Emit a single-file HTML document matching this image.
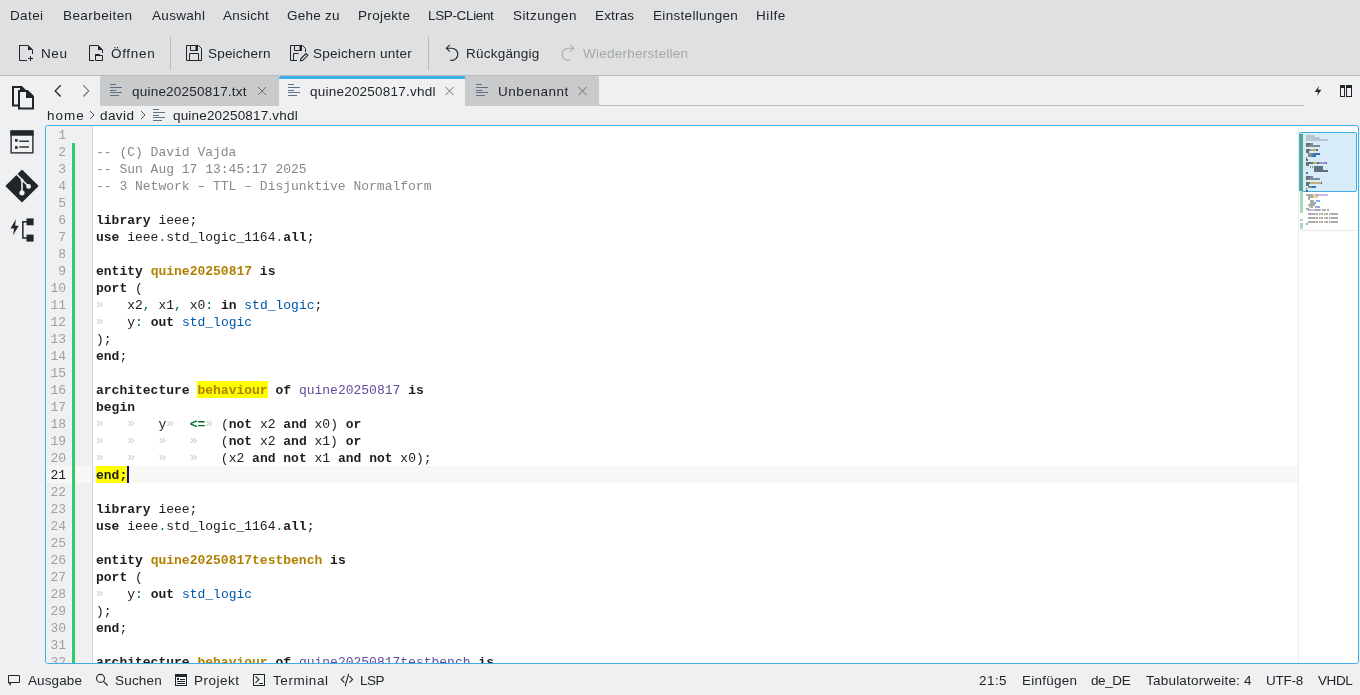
<!DOCTYPE html>
<html><head><meta charset="utf-8">
<style>
*{box-sizing:border-box}
html,body{margin:0;padding:0}
body{width:1360px;height:695px;overflow:hidden;position:relative;background:#eff0f1;font-family:"Liberation Sans",sans-serif;font-size:13px;color:#232629}
.a{position:absolute}
.tx,#frame,svg.a{will-change:transform}
.tx{position:absolute;font-size:13.5px;line-height:15px;white-space:pre}
#frame{position:absolute;left:45px;top:125px;width:1314px;height:539px;border:1px solid #3daee9;border-radius:3px;background:#fff;overflow:hidden}
#gutter{position:absolute;left:0;top:0;width:46px;height:100%;background:#f0f0f0}
#gsep{position:absolute;left:46px;top:0;width:1px;height:100%;background:#d5d5d5}
#curl{position:absolute;left:0;top:340px;width:1252px;height:17px;background:#f8f7f6}
#gbar{position:absolute;left:26px;top:17px;width:3px;height:600px;background:#2ecc71}
#cursor{position:absolute;left:81px;top:340px;width:2px;height:17px;background:#0f0f8c}
.code{position:absolute;left:50px;top:1px;font-family:"Liberation Mono",monospace;font-size:13px;line-height:17px;color:#1f1c1b;white-space:pre}
.ln{position:absolute;left:0;top:1px;width:20px;text-align:right;font-family:"Liberation Mono",monospace;font-size:13px;line-height:17px;color:#a0a0a0;white-space:pre}
b{font-weight:bold}
.c{color:#898887} .d{color:#b08000} .t{color:#0057ae} .f{color:#644a9b} .o{color:#006e28} .m{color:#cdcdcd;position:relative;top:-1px} .hl{background:#ffff00}
</style></head><body>
<div class="a" style="left:0;top:0;width:1360px;height:75px;background:#dee0e2"></div>
<div class="a" style="left:0;top:75px;width:1360px;height:1px;background:#b9babc"></div>
<div class="a" style="left:170px;top:36px;width:1px;height:34px;background:#b9babc"></div>
<div class="a" style="left:428px;top:36px;width:1px;height:34px;background:#b9babc"></div>
<div class="a" style="left:100px;top:76px;width:179px;height:30px;background:#c9cacc;border-top-left-radius:2px"></div>
<div class="a" style="left:465px;top:76px;width:134px;height:30px;background:#c9cacc;border-top-right-radius:2px"></div>
<div class="a" style="left:279px;top:76px;width:186px;height:3px;background:#3daee9;border-top-left-radius:2px;border-top-right-radius:1px"></div>
<div class="a" style="left:598px;top:105px;width:706px;height:1px;background:#bdbebf"></div>
<div id="frame">
<div id="gutter"></div>
<div id="curl"></div>
<div class="a" style="left:151px;top:255px;width:71px;height:17px;background:#ffff00"></div>
<div class="a" style="left:50px;top:340px;width:31px;height:17px;background:#ffff00"></div>
<div id="gbar"></div>
<div id="gsep"></div>
<div class="ln">1
2
3
4
5
6
7
8
9
10
11
12
13
14
15
16
17
18
19
20
<span style="color:#1e1e1e">21</span>
22
23
24
25
26
27
28
29
30
31
32</div>
<div class="code">
<span class="c">-- (C) David Vajda</span>
<span class="c">-- Sun Aug 17 13:45:17 2025</span>
<span class="c">-- 3 Network – TTL – Disjunktive Normalform</span>

<b>library</b> ieee;
<b>use</b> ieee<span class="o">.</span>std_logic_1164<span class="o">.</span><b>all</b>;

<b>entity</b> <b class="d">quine20250817</b> <b>is</b>
<b>port</b> (
<span class="m">»</span>   x2<span class="o">,</span> x1<span class="o">,</span> x0<span class="o">:</span> <b>in</b> <span class="t">std_logic</span>;
<span class="m">»</span>   y<span class="o">:</span> <b>out</b> <span class="t">std_logic</span>
);
<b>end</b>;

<b>architecture</b> <b class="d">behaviour</b> <b>of</b> <span class="f">quine20250817</span> <b>is</b>
<b>begin</b>
<span class="m">»</span>   <span class="m">»</span>   y<span class="m">»</span>  <b class="o">&lt;=</b><span class="m">»</span> (<b>not</b> x2 <b>and</b> x0) <b>or</b>
<span class="m">»</span>   <span class="m">»</span>   <span class="m">»</span>   <span class="m">»</span>   (<b>not</b> x2 <b>and</b> x1) <b>or</b>
<span class="m">»</span>   <span class="m">»</span>   <span class="m">»</span>   <span class="m">»</span>   (x2 <b>and</b> <b>not</b> x1 <b>and</b> <b>not</b> x0);
<b>end;</b>

<b>library</b> ieee;
<b>use</b> ieee<span class="o">.</span>std_logic_1164<span class="o">.</span><b>all</b>;

<b>entity</b> <b class="d">quine20250817testbench</b> <b>is</b>
<b>port</b> (
<span class="m">»</span>   y<span class="o">:</span> <b>out</b> <span class="t">std_logic</span>
);
<b>end</b>;

<b>architecture</b> <b class="d">behaviour</b> <b>of</b> <span class="f">quine20250817testbench</span> <b>is</b></div>
<div id="cursor"></div>
</div>
<div class="a" style="left:1298px;top:126px;width:1px;height:536px;background:#ececec"></div>
<div class="a" style="left:1299px;top:132px;width:58px;height:60px;background:#d8ebf8;border:1px solid #3daee9;border-radius:2px"></div>
<div class="a" style="left:1300px;top:134px;width:3px;height:57px;background:#5aa58a"></div>
<div class="a" style="left:1300px;top:191px;width:3px;height:22px;background:#a8d8b4"></div>
<div class="a" style="left:1300px;top:219px;width:3px;height:2px;background:#a8d8b4"></div>
<div class="a" style="left:1300px;top:223px;width:3px;height:6px;background:#a8d8b4"></div>
<div class="a" style="left:1299px;top:230px;width:58px;height:1px;background:#ececec"></div>
<div class="a" style="left:1306.0px;top:135px;width:9.0px;height:2px;background:#b7c6d2"></div>
<div class="a" style="left:1306.0px;top:137px;width:13.5px;height:2px;background:#b7c6d2"></div>
<div class="a" style="left:1306.0px;top:139px;width:21.5px;height:2px;background:#b7c6d2"></div>
<div class="a" style="left:1306.0px;top:143px;width:3.5px;height:2px;background:#62727c"></div>
<div class="a" style="left:1309.5px;top:143px;width:3.0px;height:2px;background:#7f8d95"></div>
<div class="a" style="left:1306.0px;top:145px;width:1.5px;height:2px;background:#62727c"></div>
<div class="a" style="left:1307.5px;top:145px;width:12.5px;height:2px;background:#7f8d95"></div>
<div class="a" style="left:1306.0px;top:149px;width:3.5px;height:2px;background:#62727c"></div>
<div class="a" style="left:1309.5px;top:149px;width:6.5px;height:2px;background:#c2b27a"></div>
<div class="a" style="left:1316.0px;top:149px;width:1.5px;height:2px;background:#62727c"></div>
<div class="a" style="left:1306.0px;top:151px;width:3.0px;height:2px;background:#62727c"></div>
<div class="a" style="left:1308.0px;top:153px;width:5.0px;height:2px;background:#7f8d95"></div>
<div class="a" style="left:1313.0px;top:153px;width:2.0px;height:2px;background:#62727c"></div>
<div class="a" style="left:1315.0px;top:153px;width:4.5px;height:2px;background:#2e74c4"></div>
<div class="a" style="left:1308.0px;top:155px;width:3.5px;height:2px;background:#7f8d95"></div>
<div class="a" style="left:1311.5px;top:155px;width:4.5px;height:2px;background:#2e74c4"></div>
<div class="a" style="left:1306.0px;top:157px;width:1.0px;height:2px;background:#7f8d95"></div>
<div class="a" style="left:1306.0px;top:159px;width:2.0px;height:2px;background:#62727c"></div>
<div class="a" style="left:1306.0px;top:162px;width:6.5px;height:2px;background:#62727c"></div>
<div class="a" style="left:1312.5px;top:162px;width:4.5px;height:2px;background:#c2b27a"></div>
<div class="a" style="left:1317.0px;top:162px;width:2.0px;height:2px;background:#62727c"></div>
<div class="a" style="left:1319.0px;top:162px;width:6.5px;height:2px;background:#9a95d6"></div>
<div class="a" style="left:1325.5px;top:162px;width:1.5px;height:2px;background:#62727c"></div>
<div class="a" style="left:1306.0px;top:164px;width:2.5px;height:2px;background:#62727c"></div>
<div class="a" style="left:1310.0px;top:166px;width:1.0px;height:2px;background:#7f8d95"></div>
<div class="a" style="left:1312.0px;top:166px;width:1.0px;height:2px;background:#6aa88a"></div>
<div class="a" style="left:1314.0px;top:166px;width:9.0px;height:2px;background:#62727c"></div>
<div class="a" style="left:1314.0px;top:168px;width:9.0px;height:2px;background:#62727c"></div>
<div class="a" style="left:1314.0px;top:170px;width:13.5px;height:2px;background:#62727c"></div>
<div class="a" style="left:1306.0px;top:172px;width:2.0px;height:2px;background:#62727c"></div>
<div class="a" style="left:1306.0px;top:176px;width:3.5px;height:2px;background:#62727c"></div>
<div class="a" style="left:1309.5px;top:176px;width:3.0px;height:2px;background:#7f8d95"></div>
<div class="a" style="left:1306.0px;top:178px;width:1.5px;height:2px;background:#62727c"></div>
<div class="a" style="left:1307.5px;top:178px;width:12.5px;height:2px;background:#7f8d95"></div>
<div class="a" style="left:1306.0px;top:182px;width:3.5px;height:2px;background:#62727c"></div>
<div class="a" style="left:1309.5px;top:182px;width:11.0px;height:2px;background:#c2b27a"></div>
<div class="a" style="left:1320.5px;top:182px;width:1.5px;height:2px;background:#62727c"></div>
<div class="a" style="left:1306.0px;top:184px;width:3.0px;height:2px;background:#62727c"></div>
<div class="a" style="left:1308.0px;top:186px;width:3.5px;height:2px;background:#7f8d95"></div>
<div class="a" style="left:1311.5px;top:186px;width:4.5px;height:2px;background:#2e74c4"></div>
<div class="a" style="left:1306.0px;top:188px;width:1.0px;height:2px;background:#7f8d95"></div>
<div class="a" style="left:1306.0px;top:190px;width:2.0px;height:2px;background:#62727c"></div>
<div class="a" style="left:1306.0px;top:194px;width:7.0px;height:2px;background:#ababab"></div>
<div class="a" style="left:1313.0px;top:194px;width:3.0px;height:2px;background:#e6d3a0"></div>
<div class="a" style="left:1316.0px;top:194px;width:1.5px;height:2px;background:#ababab"></div>
<div class="a" style="left:1317.5px;top:194px;width:10.5px;height:2px;background:#cbbde8"></div>
<div class="a" style="left:1308.0px;top:196px;width:5.0px;height:2px;background:#ababab"></div>
<div class="a" style="left:1313.0px;top:196px;width:5.0px;height:2px;background:#e6d3a0"></div>
<div class="a" style="left:1308.0px;top:198px;width:1.5px;height:2px;background:#ababab"></div>
<div class="a" style="left:1310.0px;top:200px;width:3.5px;height:2px;background:#ababab"></div>
<div class="a" style="left:1315.5px;top:200px;width:4.5px;height:2px;background:#7fb0e0"></div>
<div class="a" style="left:1310.0px;top:202px;width:3.0px;height:2px;background:#ababab"></div>
<div class="a" style="left:1313.0px;top:202px;width:3.0px;height:2px;background:#7fb0e0"></div>
<div class="a" style="left:1308.0px;top:204px;width:7.0px;height:2px;background:#ababab"></div>
<div class="a" style="left:1309.0px;top:206px;width:2.0px;height:2px;background:#a8d4b4"></div>
<div class="a" style="left:1311.0px;top:206px;width:2.0px;height:2px;background:#ababab"></div>
<div class="a" style="left:1314.5px;top:206px;width:2.5px;height:2px;background:#ababab"></div>
<div class="a" style="left:1317.0px;top:206px;width:3.0px;height:2px;background:#7fb0e0"></div>
<div class="a" style="left:1306.0px;top:208px;width:2.5px;height:2px;background:#ababab"></div>
<div class="a" style="left:1308.0px;top:209px;width:2.0px;height:2px;background:#ababab"></div>
<div class="a" style="left:1310.0px;top:209px;width:5.0px;height:2px;background:#cbbde8"></div>
<div class="a" style="left:1315.0px;top:209px;width:5.0px;height:2px;background:#ababab"></div>
<div class="a" style="left:1320.0px;top:209px;width:1.0px;height:2px;background:#a8d4b4"></div>
<div class="a" style="left:1322.0px;top:209px;width:3.0px;height:2px;background:#ababab"></div>
<div class="a" style="left:1325.0px;top:209px;width:1.0px;height:2px;background:#a8d4b4"></div>
<div class="a" style="left:1327.0px;top:209px;width:2.0px;height:2px;background:#ababab"></div>
<div class="a" style="left:1308.0px;top:213px;width:7.0px;height:2px;background:#ababab"></div>
<div class="a" style="left:1315.0px;top:213px;width:1.0px;height:2px;background:#e6d3a0"></div>
<div class="a" style="left:1316.0px;top:213px;width:2.0px;height:2px;background:#ababab"></div>
<div class="a" style="left:1319.0px;top:213px;width:1.0px;height:2px;background:#ababab"></div>
<div class="a" style="left:1320.0px;top:213px;width:1.0px;height:2px;background:#e6d3a0"></div>
<div class="a" style="left:1321.0px;top:213px;width:2.0px;height:2px;background:#ababab"></div>
<div class="a" style="left:1324.0px;top:213px;width:1.0px;height:2px;background:#ababab"></div>
<div class="a" style="left:1325.0px;top:213px;width:1.0px;height:2px;background:#e6d3a0"></div>
<div class="a" style="left:1326.0px;top:213px;width:2.0px;height:2px;background:#ababab"></div>
<div class="a" style="left:1329.0px;top:213px;width:1.0px;height:2px;background:#ababab"></div>
<div class="a" style="left:1329.5px;top:213px;width:1.5px;height:2px;background:#e6d3a0"></div>
<div class="a" style="left:1331.0px;top:213px;width:7.0px;height:2px;background:#ababab"></div>
<div class="a" style="left:1308.0px;top:217px;width:7.0px;height:2px;background:#ababab"></div>
<div class="a" style="left:1315.0px;top:217px;width:1.0px;height:2px;background:#e6d3a0"></div>
<div class="a" style="left:1316.0px;top:217px;width:2.0px;height:2px;background:#ababab"></div>
<div class="a" style="left:1319.0px;top:217px;width:1.0px;height:2px;background:#ababab"></div>
<div class="a" style="left:1320.0px;top:217px;width:1.0px;height:2px;background:#e6d3a0"></div>
<div class="a" style="left:1321.0px;top:217px;width:2.0px;height:2px;background:#ababab"></div>
<div class="a" style="left:1324.0px;top:217px;width:1.0px;height:2px;background:#ababab"></div>
<div class="a" style="left:1325.0px;top:217px;width:1.0px;height:2px;background:#e6d3a0"></div>
<div class="a" style="left:1326.0px;top:217px;width:2.0px;height:2px;background:#ababab"></div>
<div class="a" style="left:1329.0px;top:217px;width:1.0px;height:2px;background:#ababab"></div>
<div class="a" style="left:1329.5px;top:217px;width:1.5px;height:2px;background:#e6d3a0"></div>
<div class="a" style="left:1331.0px;top:217px;width:7.0px;height:2px;background:#ababab"></div>
<div class="a" style="left:1308.0px;top:221px;width:7.0px;height:2px;background:#ababab"></div>
<div class="a" style="left:1315.0px;top:221px;width:1.0px;height:2px;background:#e6d3a0"></div>
<div class="a" style="left:1316.0px;top:221px;width:2.0px;height:2px;background:#ababab"></div>
<div class="a" style="left:1319.0px;top:221px;width:1.0px;height:2px;background:#ababab"></div>
<div class="a" style="left:1320.0px;top:221px;width:1.0px;height:2px;background:#e6d3a0"></div>
<div class="a" style="left:1321.0px;top:221px;width:2.0px;height:2px;background:#ababab"></div>
<div class="a" style="left:1324.0px;top:221px;width:1.0px;height:2px;background:#ababab"></div>
<div class="a" style="left:1325.0px;top:221px;width:1.0px;height:2px;background:#e6d3a0"></div>
<div class="a" style="left:1326.0px;top:221px;width:2.0px;height:2px;background:#ababab"></div>
<div class="a" style="left:1329.0px;top:221px;width:1.0px;height:2px;background:#ababab"></div>
<div class="a" style="left:1329.5px;top:221px;width:1.5px;height:2px;background:#e6d3a0"></div>
<div class="a" style="left:1331.0px;top:221px;width:7.0px;height:2px;background:#ababab"></div>
<div class="a" style="left:1306.0px;top:223px;width:2.0px;height:2px;background:#ababab"></div>
<div class="tx" style="left:10.00px;top:8px;letter-spacing:0.375px;color:#232629">Datei</div>
<div class="tx" style="left:62.50px;top:8px;letter-spacing:0.422px;color:#232629">Bearbeiten</div>
<div class="tx" style="left:151.50px;top:8px;letter-spacing:0.317px;color:#232629">Auswahl</div>
<div class="tx" style="left:223.00px;top:8px;letter-spacing:0.267px;color:#232629">Ansicht</div>
<div class="tx" style="left:287.20px;top:8px;letter-spacing:0.233px;color:#232629">Gehe zu</div>
<div class="tx" style="left:357.80px;top:8px;letter-spacing:0.343px;color:#232629">Projekte</div>
<div class="tx" style="left:428.40px;top:8px;letter-spacing:-0.356px;color:#232629">LSP-CLient</div>
<div class="tx" style="left:513.00px;top:8px;letter-spacing:0.425px;color:#232629">Sitzungen</div>
<div class="tx" style="left:594.60px;top:8px;letter-spacing:0.160px;color:#232629">Extras</div>
<div class="tx" style="left:652.50px;top:8px;letter-spacing:0.317px;color:#232629">Einstellungen</div>
<div class="tx" style="left:755.50px;top:8px;letter-spacing:0.575px;color:#232629">Hilfe</div>
<div class="tx" style="left:41.00px;top:46px;letter-spacing:0.600px;color:#232629">Neu</div>
<div class="tx" style="left:110.80px;top:46px;letter-spacing:0.680px;color:#232629">Öffnen</div>
<div class="tx" style="left:208.40px;top:46px;letter-spacing:0.200px;color:#232629">Speichern</div>
<div class="tx" style="left:313.40px;top:46px;letter-spacing:0.243px;color:#232629">Speichern unter</div>
<div class="tx" style="left:466.00px;top:46px;letter-spacing:0.222px;color:#232629">Rückgängig</div>
<div class="tx" style="left:583.00px;top:46px;letter-spacing:0.253px;color:#a5a7a9">Wiederherstellen</div>
<div class="tx" style="left:131.60px;top:84px;letter-spacing:0.213px;color:#232629">quine20250817.txt</div>
<div class="tx" style="left:309.80px;top:84px;letter-spacing:0.224px;color:#232629">quine20250817.vhdl</div>
<div class="tx" style="left:497.50px;top:84px;letter-spacing:0.537px;color:#232629">Unbenannt</div>
<div class="tx" style="left:46.80px;top:108px;letter-spacing:1.033px;color:#232629">home</div>
<div class="tx" style="left:99.70px;top:108px;letter-spacing:0.425px;color:#232629">david</div>
<div class="tx" style="left:172.75px;top:108px;letter-spacing:0.179px;color:#232629">quine20250817.vhdl</div>
<div class="tx" style="left:28.20px;top:673px;letter-spacing:0.117px;color:#232629">Ausgabe</div>
<div class="tx" style="left:115.00px;top:673px;letter-spacing:0.200px;color:#232629">Suchen</div>
<div class="tx" style="left:194.00px;top:673px;letter-spacing:0.500px;color:#232629">Projekt</div>
<div class="tx" style="left:273.00px;top:673px;letter-spacing:0.571px;color:#232629">Terminal</div>
<div class="tx" style="left:360.00px;top:673px;letter-spacing:-0.500px;color:#232629">LSP</div>
<div class="tx" style="left:979.20px;top:673px;letter-spacing:0.433px;color:#232629">21:5</div>
<div class="tx" style="left:1021.50px;top:673px;letter-spacing:0.243px;color:#232629">Einfügen</div>
<div class="tx" style="left:1091.00px;top:673px;letter-spacing:-0.400px;color:#232629">de_DE</div>
<div class="tx" style="left:1146.30px;top:673px;letter-spacing:0.219px;color:#232629">Tabulatorweite: 4</div>
<div class="tx" style="left:1266.00px;top:673px;letter-spacing:-0.275px;color:#232629">UTF-8</div>
<div class="tx" style="left:1317.80px;top:673px;letter-spacing:-0.400px;color:#232629">VHDL</div>
<svg class="a" style="left:0;top:0" width="1360" height="695" viewBox="0 0 1360 695">
<path d="M19.5 45.5H28L32.5 50V54" fill="none" stroke="#232629"/>
<path d="M19.5 45V60.5H27" fill="none" stroke="#232629"/>
<path d="M28 45L33 50H28Z" fill="#232629"/>
<path d="M28 58.5H33M30.5 56V61" fill="none" stroke="#232629"/>
<path d="M89.5 61V45.5H98L102.5 50V53" fill="none" stroke="#232629"/>
<path d="M89.5 60.5H94" fill="none" stroke="#232629"/>
<path d="M98 45L103 50H98Z" fill="#232629"/>
<path d="M95.5 54.5H99L100 55.5H102.5V60.5H95.5Z" fill="none" stroke="#232629"/>
<path d="M95 54H99.5L100.5 56H96V58H95Z" fill="#232629"/>
<path d="M186.5 45.5H198.5L201.5 48.5V60.5H186.5Z" fill="none" stroke="#232629"/>
<path d="M190.5 45.5V50.5H197.5V45.5" fill="none" stroke="#232629"/>
<rect x="195.5" y="46" width="2" height="4.5" fill="#232629"/>
<path d="M189.5 61V53.5H198.5V61" fill="none" stroke="#232629"/>
<path d="M290.5 45.5H302.5L305.5 48.5V52 M297 60.5H290.5V45.5" fill="none" stroke="#232629"/>
<path d="M294.5 45.5V50.5H301.5V45.5" fill="none" stroke="#232629"/>
<rect x="299.5" y="46" width="2" height="4.5" fill="#232629"/>
<path d="M293.5 61V53.5H298.5" fill="none" stroke="#232629"/>
<path d="M300.5 60.8L301 58.5L306 53.5L307.8 55.3L302.8 60.3Z" fill="none" stroke="#232629" stroke-width="1.2"/>
<path d="M446.2 48.2H451.7A6.1 6.1 0 0 1 451.7 60.4H450.3" fill="none" stroke="#232629" stroke-width="1.1"/>
<path d="M449.8 44.9L446.4 48.2L449.8 51.6" fill="none" stroke="#232629" stroke-width="1.1"/>
<path d="M573.8 48.2H568.3A6.1 6.1 0 0 0 568.3 60.4H569.7" fill="none" stroke="#aaacae" stroke-width="1.1"/>
<path d="M570.2 44.9L573.6 48.2L570.2 51.6" fill="none" stroke="#aaacae" stroke-width="1.1"/>
<path d="M13 87H21.5L25 90.5" fill="none" stroke="#232629" stroke-width="2"/>
<path d="M13 86V105.5H18" fill="none" stroke="#232629" stroke-width="2"/>
<path d="M19 91H27.5L33 96.5V108.5H19Z" fill="none" stroke="#232629" stroke-width="2"/>
<path d="M26 90L34 98H26Z" fill="#232629"/><path d="M20 86L25.5 91.5H20Z" fill="#232629"/>
<rect x="11.15" y="131.15" width="21.7" height="21.7" fill="none" stroke="#35383c" stroke-width="1.5"/>
<rect x="10.4" y="130.4" width="23.2" height="5.3" fill="#232629"/>
<rect x="15" y="139.1" width="2.6" height="2.6" fill="#232629"/>
<rect x="15" y="146.2" width="2.6" height="2.6" fill="#232629"/>
<path d="M19.2 141.2H29M19.2 147H29" stroke="#35383c" stroke-width="1.4"/>
<path d="M22 171L37.2 186L22 201L6.8 186Z" fill="#232629" stroke="#232629" stroke-linejoin="round" stroke-width="2.2"/>
<path d="M15.5 173L22 179.5V192M22 180L28.5 186.3" fill="none" stroke="#eff0f1" stroke-width="1.6"/>
<circle cx="22" cy="192.8" r="2.6" fill="#eff0f1"/><circle cx="22" cy="180" r="1.5" fill="#eff0f1"/><circle cx="28.6" cy="186.4" r="2.4" fill="#eff0f1"/>
<path d="M15.8 219.2L10.5 228.5H14.1L13 235.2L18.8 225.7H15.2Z" fill="#232629"/>
<rect x="26.5" y="218.4" width="7.1" height="6.9" fill="#232629"/><rect x="26.5" y="234.6" width="7.1" height="7" fill="#232629"/>
<path d="M27 221.7H22.85V237.9H27" fill="none" stroke="#232629" stroke-width="1.5"/>
<path d="M110 84.5H116M110 87.5H122M110 90.5H116M110 92.5H122M110 95.5H119" stroke="#607087" stroke-width="1"/>
<path d="M288 84.5H294M288 87.5H300M288 90.5H294M288 92.5H300M288 95.5H297" stroke="#607087" stroke-width="1"/>
<path d="M476 84.5H482M476 87.5H488M476 90.5H482M476 92.5H488M476 95.5H485" stroke="#607087" stroke-width="1"/>
<path d="M153 109.5H159M153 112.5H165M153 115.5H159M153 117.5H165M153 120.5H162" stroke="#607087" stroke-width="1"/>
<path d="M258 87L266 95M266 87L258 95" stroke="#6e7072" stroke-width="1"/>
<path d="M445.5 87L453.5 95M453.5 87L445.5 95" stroke="#6e7072" stroke-width="1"/>
<path d="M578.5 87L586.5 95M586.5 87L578.5 95" stroke="#6e7072" stroke-width="1"/>
<path d="M60.7 85.3L55.2 90.9L60.7 96.5" fill="none" stroke="#232629" stroke-width="1.3"/>
<path d="M83.3 85.3L88.8 90.9L83.3 96.5" fill="none" stroke="#707274" stroke-width="1.1"/>
<path d="M90 111L94 115L90 119" fill="none" stroke="#4d5054" stroke-width="1"/>
<path d="M141 111L145 115L141 119" fill="none" stroke="#4d5054" stroke-width="1"/>
<path d="M1319.2 85.8L1314.8 92H1318.2L1317 96L1321.4 89.8H1318Z" fill="#232629"/>
<rect x="1340.5" y="85.5" width="4" height="11" fill="none" stroke="#232629"/><rect x="1346.5" y="85.5" width="5" height="11" fill="none" stroke="#232629"/>
<rect x="1340" y="85" width="5" height="3" fill="#232629"/><rect x="1346" y="85" width="6" height="3" fill="#232629"/>
<path d="M8.5 675.5H19.5V682.5H8.5Z" fill="none" stroke="#232629" stroke-width="1"/><path d="M8 682.5H11L10.6 686Z" fill="#232629"/>
<circle cx="100.5" cy="678.4" r="4" fill="none" stroke="#232629" stroke-width="1.1"/><path d="M103.4 681.3L107.6 685.5" stroke="#232629" stroke-width="1.2"/>
<rect x="175.5" y="674.5" width="11" height="11" fill="none" stroke="#232629"/><rect x="175" y="674" width="12" height="3" fill="#232629"/>
<rect x="177" y="678" width="2" height="2" fill="#232629"/><path d="M180 679.5H185M177 681.5H185M177 683.5H185" fill="none" stroke="#232629" stroke-width="1"/>
<rect x="253.5" y="674.5" width="11" height="11" fill="none" stroke="#232629" stroke-width="1"/>
<path d="M255.5 676.3L258.9 679.6L255.5 682.9" fill="none" stroke="#232629" stroke-width="1.1"/><path d="M259.2 683.5H263" stroke="#232629" stroke-width="1"/>
<path d="M344.5 676.2L341.3 679.4L344.5 682.6M349.4 676.2L352.6 679.4L349.4 682.6" fill="none" stroke="#232629" stroke-width="1.1"/><path d="M348.5 674.4L345.4 685.6" stroke="#232629" stroke-width="1.1" stroke-linecap="round"/>
</svg>
</body></html>
